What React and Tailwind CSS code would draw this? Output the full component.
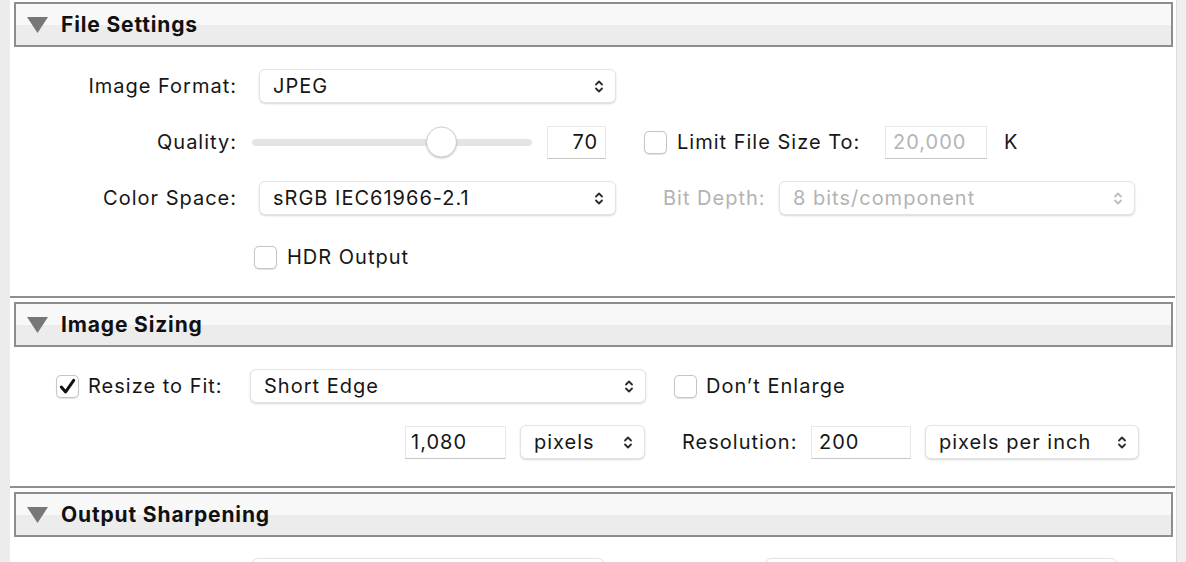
import React from 'react';

const Chevrons = ({ disabled }) => (
  <svg width="10" height="15" viewBox="0 0 10 15" fill="none" stroke={disabled ? '#bdbdbd' : '#2b2b2b'} strokeWidth="1.8" strokeLinecap="round" strokeLinejoin="round">
    <path d="M2 5.5 L5 2.5 L8 5.5" />
    <path d="M2 9.5 L5 12.5 L8 9.5" />
  </svg>
);

const Select = ({ value, className, disabled }) => (
  <div className={`flex items-center justify-between h-[34px] rounded-[6px] bg-white border border-[#e3e3e3] shadow-[0_1px_2px_rgba(0,0,0,0.16)] pl-[13px] pr-[11px] ${disabled ? 'text-[#b3b3b3]' : 'text-[#161616]'} ${className}`}>
    <span className="whitespace-nowrap">{value}</span>
    <Chevrons disabled={disabled} />
  </div>
);

const Field = ({ value, className }) => (
  <div className={`flex items-center h-[33px] bg-white border border-[#e8e8e8] border-b-[#c6c6c6] whitespace-nowrap ${className}`}>
    {value}
  </div>
);

const Checkbox = ({ checked, className }) => (
  <div className={`w-[23px] h-[23px] shrink-0 rounded-[5px] border border-[#c6c6c6] bg-white shadow-[0_0.5px_1px_rgba(0,0,0,0.12)] flex items-center justify-center ${className}`}>
    {checked && (
      <svg width="19" height="19" viewBox="0 0 16 16" fill="none" stroke="#111" strokeWidth="2.5" strokeLinecap="round" strokeLinejoin="round">
        <path d="M2.8 8.4 L6.4 12.6 L13.2 2.8" />
      </svg>
    )}
  </div>
);

const Header = ({ title }) => (
  <div className="ml-[4px] mr-[3px] h-[45px] shrink-0 border-2 border-[#8d8d8d] bg-[linear-gradient(to_bottom,#f8f8f8_50%,#ececec_50%)] flex items-center pl-[11px]">
    <svg width="21" height="16" viewBox="0 0 21 16">
      <polygon points="0,0 21,0 10.5,16" fill="#777" />
    </svg>
    <span className="ml-[13px] text-[21px] font-bold text-[#111] tracking-[0.85px] whitespace-nowrap">{title}</span>
  </div>
);

const Separator = () => <div className="h-[2px] shrink-0 bg-[#8f8f8f] mr-[1px]" />;

export default function App() {
  return (
    <div className="w-[1186px] h-[562px] overflow-hidden bg-[#ececec] flex font-['Inter','Noto_Sans',sans-serif] text-[20px] tracking-[1px] text-[#161616]">
      <div className="w-[10px] shrink-0" />
      <div className="w-[1166px] shrink-0 bg-white flex flex-col">
        {/* File Settings */}
        <div className="pt-[2px]">
          <Header title="File Settings" />
        </div>
        <div className="pt-[22px] pb-[22px] flex flex-col gap-[22px]">
          <div className="flex items-center h-[34px]">
            <span className="w-[227px] text-right whitespace-nowrap">Image Format:</span>
            <Select value="JPEG" className="ml-[22px] w-[357px]" />
          </div>
          <div className="flex items-center h-[34px]">
            <span className="w-[227px] text-right">Quality:</span>
            <div className="relative ml-[15px] w-[280px] h-[7px] rounded-full bg-[#e4e4e4]">
              <div className="absolute left-[174px] top-1/2 -translate-y-1/2 w-[31px] h-[31px] rounded-full bg-white border border-[#d0d0d0] shadow-[0_1px_2px_rgba(0,0,0,0.2)]" />
            </div>
            <Field value="70" className="ml-[15px] w-[59px] justify-end pr-[7px]" />
            <Checkbox className="ml-[38px]" />
            <span className="ml-[10px] w-[180px] whitespace-nowrap">Limit File Size To:</span>
            <Field value="20,000" className="ml-[28px] w-[102px] pl-[7px] text-[#b5b5b5]" />
            <span className="ml-[17px]">K</span>
          </div>
          <div className="flex items-center h-[34px]">
            <span className="w-[227px] text-right whitespace-nowrap">Color Space:</span>
            <Select value="sRGB IEC61966-2.1" className="ml-[22px] w-[357px]" />
            <span className="ml-[47px] w-[103px] whitespace-nowrap text-[#b3b3b3]">Bit Depth:</span>
            <Select value="8 bits/component" disabled className="ml-[13px] w-[356px]" />
          </div>
          <div className="flex items-center h-[34px] mt-[3px]">
            <Checkbox className="ml-[244px]" />
            <span className="ml-[10px]">HDR Output</span>
          </div>
        </div>
        <Separator />

        {/* Image Sizing */}
        <div className="pt-[4px]">
          <Header title="Image Sizing" />
        </div>
        <div className="pt-[22px] pb-[27px] flex flex-col gap-[22px]">
          <div className="flex items-center h-[34px]">
            <Checkbox checked className="ml-[46px]" />
            <span className="ml-[9px] w-[134px] whitespace-nowrap">Resize to Fit:</span>
            <Select value="Short Edge" className="ml-[28px] w-[396px]" />
            <Checkbox className="ml-[28px]" />
            <span className="ml-[9px]">Don’t Enlarge</span>
          </div>
          <div className="flex items-center h-[34px]">
            <Field value="1,080" className="ml-[395px] w-[101px] pl-[5px]" />
            <Select value="pixels" className="ml-[14px] w-[125px] pl-[12px]" />
            <span className="ml-[37px] w-[115px] whitespace-nowrap">Resolution:</span>
            <Field value="200" className="ml-[14px] w-[100px] pl-[7px]" />
            <Select value="pixels per inch" className="ml-[14px] w-[214px] pl-[12px]" />
          </div>
        </div>
        <Separator />

        {/* Output Sharpening */}
        <div className="pt-[4px]">
          <Header title="Output Sharpening" />
        </div>
        <div className="pt-[21px] flex items-start">
          <div className="ml-[242px] w-[352px] h-[34px] rounded-[6px] bg-white border border-[#e3e3e3] shadow-[0_1px_2px_rgba(0,0,0,0.16)]" />
          <div className="ml-[161px] w-[352px] h-[34px] rounded-[6px] bg-white border border-[#e3e3e3] shadow-[0_1px_2px_rgba(0,0,0,0.16)]" />
        </div>
      </div>
      <div className="flex-1 border-l border-[#dcdcdc] bg-[#efefef]" />
    </div>
  );
}
